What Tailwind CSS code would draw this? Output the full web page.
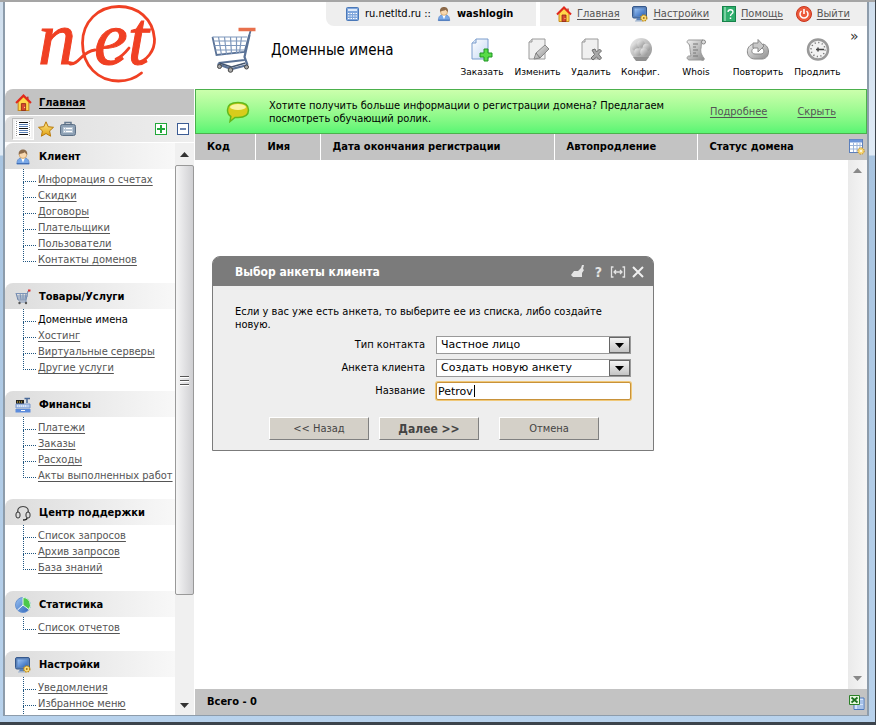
<!DOCTYPE html>
<html lang="ru">
<head>
    <meta charset="UTF-8">
    <meta name="viewport" content="width=device-width, initial-scale=1.0">
    <title>Доменные имена</title>
    <script src="https://cdn.jsdelivr.net/npm/@tailwindcss/browser@4"></script>
</head>
<body class="h-screen overflow-hidden bg-[#3c444c] font-['DejaVu_Sans_Condensed','DejaVu_Sans',sans-serif] text-[11px] leading-4 text-black">

    <!-- shared icons -->
    <svg class="absolute size-0">
        <linearGradient id="gGold" x1="0" y1="0" x2="0" y2="1"><stop offset="0" stop-color="#ffe88a"/><stop offset="1" stop-color="#e0a010"/></linearGradient>
        <linearGradient id="gBlue" x1="0" y1="0" x2="1" y2="1"><stop offset="0" stop-color="#9cc4f4"/><stop offset="1" stop-color="#2a62b8"/></linearGradient>
        <linearGradient id="gGray" x1="0" y1="0" x2="1" y2="1"><stop offset="0" stop-color="#f0f0f0"/><stop offset="1" stop-color="#8c8c8c"/></linearGradient>
        <linearGradient id="gPage" x1="0" y1="0" x2="1" y2="1"><stop offset="0" stop-color="#ffffff"/><stop offset="1" stop-color="#c4d8f4"/></linearGradient>
        <symbol id="house" viewBox="0 0 16 16">
            <path d="M3 7.500 8 2.500l5 5V15.500H3z" fill="#ffd84a" stroke="#c98a1c"/>
            <path d="M6 15.500V9h4v6.500z" fill="#d84a30" stroke="#8f2a18" stroke-width=".8"/>
            <path d="M12 2.500v3" stroke="#c23a2a" stroke-width="1.500"/>
            <path d="M1 8.500 8 1.500l7 7" fill="none" stroke="#e2281c" stroke-width="2"/>
            <circle cx="9" cy="12.500" r=".6" fill="#ffe88a"/>
        </symbol>
        <symbol id="monitor" viewBox="0 0 16 16">
            <rect x=".5" y=".5" width="14" height="11.500" rx="1.500" fill="#5b82b8" stroke="#35588c"/>
            <rect x="2.500" y="2.500" width="10" height="7.500" fill="url(#gBlue)"/>
            <path d="M5 12h5l1 2.500H4z" fill="#5b82b8"/><path d="M3 15h7" stroke="#9ab0cc"/>
            <circle cx="11.800" cy="12" r="3" fill="#f4cc50" stroke="#b88410" stroke-width="1.400" stroke-dasharray="1.400 1"/>
            <circle cx="11.800" cy="12" r="2.400" fill="#f8dc80"/><circle cx="11.800" cy="12" r=".9" fill="#a87008"/>
        </symbol>
        <symbol id="user" viewBox="0 0 16 17">
            <path d="M1.500 16c0-4 1.500-6 4-6.500h5c2.500.5 4 2.500 4 6.500z" fill="#78a8e8" stroke="#5a86c8" stroke-width=".8"/>
            <path d="M6 9.500h4l-2 5z" fill="#fff"/><path d="M1.500 15.500h13" stroke="#3a68b0"/>
            <circle cx="8" cy="6" r="4" fill="#f8d8b0" stroke="#c89858" stroke-width=".8"/>
            <path d="M3.500 6C3 2 5.500.5 8 .5S13 2 12.500 6C11 5.500 10.500 4 10 3.500 8 5 5.500 4.500 3.500 6z" fill="#8c6a4a"/>
        </symbol>
        <symbol id="cart" viewBox="0 0 44 46">
            <path d="M1 10 5 28l28-3 6-21" fill="none" stroke="#5a7296" stroke-width="1.800"/>
            <path d="M1 10h35M2 14h33M3 18.500h31M4 23h29M7 10l3 18M13 10l2 18M19 10l1 17M25 10v17M30 10l-2 16" fill="none" stroke="#7f98bc" stroke-width="1.200"/>
            <path d="M38 8 33 30l3 8M7 36l26-3M6 37l14 5 16-4" fill="none" stroke="#5a7296" stroke-width="2.200"/>
            <path d="M8 36l12 4 14-4" fill="none" stroke="#42546e" stroke-width="1.500"/>
            <path d="M27 2.500h17" stroke="#e8704c" stroke-width="3.500"/>
            <g fill="#aaa" stroke="#444"><circle cx="8" cy="39.500" r="2"/><circle cx="19" cy="43" r="2.300"/><circle cx="35" cy="40" r="2"/></g>
        </symbol>
        <symbol id="page" viewBox="0 0 24 24">
            <path d="M6 1h13v20H3V4z" fill="#f0f0f0" stroke="#9a9a9a"/><path d="M6 1v3H3" fill="#ddd" stroke="#9a9a9a"/>
        </symbol>
    </svg>

    <div class="flex h-screen flex-col pr-px pb-[3px]">
    <div class="flex min-h-0 flex-1 border-t-2 border-t-[#a5a5a5] bg-[linear-gradient(#cfdeed_0,#e0ebf6_153px,#a8c4e0_154px,#b8d2ec_100%)] pr-[6px] pb-[6px] pl-[3px]">
    <div class="flex min-w-0 flex-1 flex-col border-x-2 border-b border-[#8d9cab] bg-white">

        <header class="flex h-[87px] shrink-0">
            <a href="#" aria-label="net" class="w-[190px] shrink-0">
                <svg class="h-[86px] w-40 overflow-visible" viewBox="5 2 160 86">
                    <g fill="#f04023" stroke="#f04023" stroke-width="1" font-family="Liberation Serif, serif" font-style="italic" font-size="76">
                        <text x="38" y="64">n</text><text x="94" y="64">et</text>
                    </g>
                    <path d="M70 64c9 1 12-13 25-14M116 59c6-2 9-6 13-11M135 63C147 62 155 50 154.500 39 153 18 137 6.500 119 6.500 98 6.500 82.500 22 82.500 43c0 23 16 38 36 38 9 0 17-3 23-8" fill="none" stroke="#f04023" stroke-width="2.800" stroke-linecap="round"/>
                </svg>
            </a>

            <div class="flex min-w-0 flex-1 flex-col">
                <nav class="flex h-6 justify-end gap-1">
                    <div class="flex w-[210px] items-center rounded-bl-lg bg-[#eee] pl-5">
                        <svg class="mr-[6px] h-[14px] w-[13px]" viewBox="0 0 13 14"><rect x=".5" y=".5" width="12" height="13" rx="1" fill="#7fa6dc" stroke="#4a78b8"/><path d="M2 3h9" stroke="#dce9fa" stroke-width="2"/><path d="M2 6.500h9M2 9h9M2 11.500h9" stroke="#fff" stroke-dasharray="1.500 1"/></svg>
                        <span>ru.netltd.ru ::</span>
                        <svg class="mx-[6px] h-4 w-[14px]"><use href="#user"/></svg>
                        <b>washlogin</b>
                    </div>
                    <div class="flex w-[327px] items-center justify-between bg-[#eee] pr-[17px] pl-4 text-[#555]">
                        <a href="#" class="flex items-center gap-[5px] underline underline-offset-2"><svg class="size-4"><use href="#house"/></svg>Главная</a>
                        <a href="#" class="flex items-center gap-[5px] underline underline-offset-2"><svg class="size-4"><use href="#monitor"/></svg>Настройки</a>
                        <a href="#" class="flex items-center gap-[5px] underline underline-offset-2">
                            <svg class="h-4 w-[14px]" viewBox="0 0 14 16"><rect x=".5" y=".5" width="13" height="15" fill="#2fae6c" stroke="#16834a"/><path d="M3 1v14" stroke="#c8f0d8"/><path d="M6 6c0-3 5-3 5 0 0 2-2.500 1.500-2.500 4" fill="none" stroke="#fff" stroke-width="1.300"/><path d="M8.500 11.500v1.500" stroke="#fff" stroke-width="1.500"/></svg>Помощь</a>
                        <a href="#" class="flex items-center gap-[5px] underline underline-offset-2">
                            <svg class="size-4" viewBox="0 0 16 16"><circle cx="8" cy="8" r="7.500" fill="#ec5a3c" stroke="#c8341c"/><path d="M5.500 5a4 4 0 1 0 5 0" fill="none" stroke="#fff" stroke-width="1.500"/><path d="M8 3v5" stroke="#fff" stroke-width="1.600"/></svg>Выйти</a>
                    </div>
                </nav>

                <div class="flex flex-1 items-start justify-between">
                    <h1 class="flex items-center gap-[15px] pt-px pl-4 text-[15px]">
                        <svg class="h-[46px] w-[45px]"><use href="#cart"/></svg>Доменные имена
                    </h1>
                    <div class="flex gap-2 pt-3 pr-[9px] font-['DejaVu_Sans',sans-serif] text-[9px] leading-3">
                        <button class="flex w-[46px] flex-col items-center gap-1 whitespace-nowrap">
                            <svg class="size-6" viewBox="0 0 24 24"><path d="M6 1h12v20H2V5z" fill="url(#gPage)" stroke="#7a9ccc"/><path d="M6 1v4H2" fill="#dce8f8" stroke="#7a9ccc"/><path d="M14 11h4v4h4v4h-4v4h-4v-4h-4v-4h4z" fill="#58dc48" stroke="#1e9424"/></svg>Заказать</button>
                        <button class="flex w-[49px] flex-col items-center gap-1 whitespace-nowrap">
                            <svg class="size-6" viewBox="0 0 24 24"><use href="#page"/><path d="m8 21 2-6 9-8 4 4-9 9z" fill="url(#gGray)" stroke="#888"/><path d="m10 15 4 5" stroke="#777"/></svg>Изменить</button>
                        <button class="flex w-[42px] flex-col items-center gap-1 whitespace-nowrap">
                            <svg class="size-6" viewBox="0 0 24 24"><use href="#page"/><path d="m13 12 3-1 1.500 3 3-3 2 2-3 3 3 4-2 2-3-3-3.500 3-2-2 3.500-3.500z" fill="#a8a8a8" stroke="#6e6e6e"/></svg>Удалить</button>
                        <button class="flex w-[41px] flex-col items-center gap-1 whitespace-nowrap">
                            <svg class="size-6" viewBox="0 0 24 24"><circle cx="12" cy="11" r="11" fill="url(#gGray)"/><path d="M4 19h16l-3 4H7z" fill="#909090"/><g fill="url(#gGray)"><circle cx="6.500" cy="9" r="3.800"/><circle cx="12" cy="6" r="3.800"/><circle cx="17.500" cy="9.500" r="3.800"/><circle cx="9" cy="14" r="3.800"/><circle cx="15" cy="14" r="3.800"/></g></svg>Конфиг.</button>
                        <button class="flex w-[54px] flex-col items-center gap-1 whitespace-nowrap">
                            <svg class="size-6" viewBox="0 0 24 24"><path d="M5 2h14c-3 1-1 4-2 8s1 8 3 10c1 2-1 3-3 2H5c-3-1-2-4 0-4h2C6 14 6 8 5 6 2 5 3 2 5 2z" fill="url(#gGray)" stroke="#999"/><circle cx="19.500" cy="4" r="2" fill="#ddd" stroke="#888"/><path d="M9 6h5M9 9h3M9 12h5M9 15h3M9 18h5" stroke="#777"/></svg>Whois</button>
                        <button class="flex w-[54px] flex-col items-center gap-1 whitespace-nowrap">
                            <svg class="size-6" viewBox="0 0 24 24"><path d="M8 6c-9 1-9 15 1 15h7c8 0 9-13 1-15l-1 4c3 2 2 6-1 6H9c-4 0-4-5-1-6z" fill="url(#gGray)" stroke="#888"/><path d="M7 5h5V1.500L18 8l-6 6v-4H7z" fill="#c8c8c8" stroke="#888"/></svg>Повторить</button>
                        <button class="flex w-[49px] flex-col items-center gap-1 whitespace-nowrap">
                            <svg class="size-6" viewBox="0 0 24 24"><circle cx="12" cy="11.500" r="10" fill="#f2f2f2" stroke="#999" stroke-width="2.500"/><circle cx="12" cy="11.500" r="7" fill="none" stroke="#777" stroke-width="1.500" stroke-dasharray="1.200 2.465"/><path d="M10 11.500h8M12 9.500v4" stroke="#444" stroke-width="1.500"/></svg>Продлить</button>
                        <button aria-label="Ещё" class="h-3 w-2 -translate-y-2 text-sm leading-3 text-[#333]">»</button>
                    </div>
                </div>
            </div>
        </header>

        <div class="flex min-h-0 flex-1">
            <aside class="flex w-[190px] shrink-0 flex-col pr-px">
                <div class="flex h-[26px] shrink-0 items-center gap-[7px] rounded-tl-lg bg-[#c3c3c3] pt-px pl-[10px] font-bold">
                    <svg class="size-[17px]"><use href="#house"/></svg>
                    <a href="#" class="underline underline-offset-2">Главная</a>
                </div>
                <div class="mt-px flex h-[26px] shrink-0 items-center rounded-tl-lg bg-linear-to-r from-[#dedede] to-[#eee] pr-[5px] pl-[7px]">
                    <button aria-label="Список" class="mr-1 flex size-[22px] items-center justify-center border border-[#bbb] border-r-white border-b-white bg-[#f2f2f2]">
                        <svg class="size-4" viewBox="0 0 16 16"><path d="M0 0h16v16H0z" fill="#fff"/><path d="M1.500 0v16M14.500 0v16" stroke="#999" stroke-dasharray="1 1"/><path d="M4 1.500h9M4 7.500h9M4 13.500h9" stroke="#111"/><path d="M4 3.500h9M4 5.500h9M4 9.500h9M4 11.500h9" stroke="#5a7fb4"/></svg>
                    </button>
                    <button aria-label="Избранное" class="mr-[6px]"><svg class="size-4" viewBox="0 0 16 16"><path d="m8 .8 2.200 4.900 5.300.6-3.900 3.600 1 5.300L8 12.500l-4.600 2.700 1-5.300L.5 6.300l5.300-.6z" fill="url(#gGold)" stroke="#b87a0c"/></svg></button>
                    <button aria-label="Портфель"><svg class="size-4" viewBox="0 0 16 16"><path d="M5 4V1.500h6V4" fill="none" stroke="#667a90" stroke-width="1.500"/><rect x=".5" y="3.500" width="15" height="11" rx="2" fill="#8da0b4" stroke="#5c7086"/><path d="M3 6h10v6H3z" fill="#b8c6d4"/><path d="M4 7.500h1m1 0h6M4 10.500h1m1 0h6" stroke="#fff"/></svg></button>
                    <button aria-label="Развернуть" class="ml-auto"><svg class="size-3" viewBox="0 0 12 12"><rect x=".5" y=".5" width="11" height="11" fill="#fff" stroke="#22a83a"/><path d="M2 6h8M6 2v8" stroke="#22a83a" stroke-width="2"/></svg></button>
                    <button aria-label="Свернуть" class="ml-[10px]"><svg class="size-3" viewBox="0 0 12 12"><rect x=".5" y=".5" width="11" height="11" fill="#fff" stroke="#3c5c94"/><path d="M3 6h6" stroke="#3c5c94" stroke-width="1.500"/></svg></button>
                </div>

                <div class="mt-px flex min-h-0 flex-1">
                    <nav class="min-w-0 flex-1 overflow-hidden whitespace-nowrap text-[#555] [&_a]:underline [&_a]:underline-offset-2 [&_h2]:flex [&_h2]:h-[26px] [&_h2]:items-center [&_h2]:gap-2 [&_h2]:rounded-tl-lg [&_h2]:bg-linear-to-r [&_h2]:from-[#dcdcdc] [&_h2]:to-[#f8f8f8] [&_h2]:pt-[2px] [&_h2]:pl-[10px] [&_h2]:font-bold [&_h2]:text-black [&_h2_svg]:size-4 [&_i]:-mt-[6px] [&_i]:mr-[2px] [&_i]:h-4 [&_i]:w-[13px] [&_i]:border-b [&_i]:border-l [&_i]:border-dotted [&_i]:border-[#1f5580] [&_li]:flex [&_li]:h-4 [&_ul]:mb-[15px] [&_ul]:overflow-hidden [&_ul]:pt-[3px] [&_ul]:pl-[18px]">
                        <h2><svg><use href="#user"/></svg>Клиент</h2>
                        <ul>
                            <li><i></i><a href="#">Информация о счетах</a></li>
                            <li><i></i><a href="#">Скидки</a></li>
                            <li><i></i><a href="#">Договоры</a></li>
                            <li><i></i><a href="#">Плательщики</a></li>
                            <li><i></i><a href="#">Пользователи</a></li>
                            <li><i></i><a href="#">Контакты доменов</a></li>
                        </ul>
                        <h2><svg viewBox="0 0 16 16"><path d="m1 4 2 7h8l2-9h2" fill="none" stroke="#6a82a8"/><path d="M1 4.500h12M2 7h11M3 9h9M5 4l1 7M8 4v7M11 4l-1 7M11 11v2H4" fill="none" stroke="#7d94b8"/><path d="M13 1.500h2.500" stroke="#e03030" stroke-width="2"/><circle cx="4.500" cy="14" r="1.200" fill="#555"/><circle cx="11" cy="14" r="1.200" fill="#555"/></svg>Товары/Услуги</h2>
                        <ul>
                            <li><i></i><span class="text-black">Доменные имена</span></li>
                            <li><i></i><a href="#">Хостинг</a></li>
                            <li><i></i><a href="#">Виртуальные серверы</a></li>
                            <li><i></i><a href="#">Другие услуги</a></li>
                        </ul>
                        <h2><svg viewBox="0 0 16 16"><path d="M1 3h8v4H1z" fill="#222"/><path d="M2 5h6" stroke="#ffd84a" stroke-dasharray="1 1"/><path d="M9.500 1.500H15M12 2v4" stroke="#4a6a98" stroke-width="1.500"/><path d="M1 7h14v4H1z" fill="#b8cef0" stroke="#7a98cc"/><path d="M2 9h9" stroke="#fff" stroke-dasharray="1 1"/><path d="M.5 12h15v3.500H.5z" fill="#5c8cdc"/><path d="M6 13.500h4" stroke="#fff"/></svg>Финансы</h2>
                        <ul>
                            <li><i></i><a href="#">Платежи</a></li>
                            <li><i></i><a href="#">Заказы</a></li>
                            <li><i></i><a href="#">Расходы</a></li>
                            <li><i></i><a href="#">Акты выполненных работ</a></li>
                        </ul>
                        <h2><svg viewBox="0 0 16 16"><path d="M3 8C2 4 4 1.500 8 1.500S14 4 13 8" fill="none" stroke="#444" stroke-width="1.200"/><rect x="1" y="7" width="4" height="6" rx="2" fill="#ddd" stroke="#333"/><rect x="11" y="7" width="4" height="6" rx="2" fill="#ddd" stroke="#333"/><path d="M12 13c0 2-2 2-4 2" fill="none" stroke="#222" stroke-width="1.300"/></svg>Центр поддержки</h2>
                        <ul>
                            <li><i></i><a href="#">Список запросов</a></li>
                            <li><i></i><a href="#">Архив запросов</a></li>
                            <li><i></i><a href="#">База знаний</a></li>
                        </ul>
                        <h2><svg viewBox="0 0 16 16"><circle cx="8" cy="8" r="7.500" fill="url(#gBlue)" stroke="#6a94d0"/><path d="M8 8V.5A7.500 7.500 0 0 1 14 12.500z" fill="#4cc84c" stroke="#e4f8e4"/><path d="m8 8-5.500 5" stroke="#fff"/></svg>Статистика</h2>
                        <ul>
                            <li><i></i><a href="#">Список отчетов</a></li>
                        </ul>
                        <h2><svg><use href="#monitor"/></svg>Настройки</h2>
                        <ul>
                            <li><i></i><a href="#">Уведомления</a></li>
                            <li><i></i><a href="#">Избранное меню</a></li>
                            <li><i></i><a href="#">Настройки</a></li>
                        </ul>
                    </nav>
                    <div class="flex w-[19px] shrink-0 flex-col bg-[#f0f0f0]">
                        <div class="flex h-[22px] items-center justify-center"><svg class="h-[5px] w-[9px]" viewBox="0 0 9 5"><path d="M0 5 4.500 0 9 5z" fill="#333"/></svg></div>
                        <div class="flex grow-43 basis-0 items-center justify-center rounded-xs border border-[#999] bg-linear-to-r from-[#f6f6f6] via-[#e2e2e4] to-[#cfcfd2]">
                            <svg class="h-[11px] w-[9px]" viewBox="0 0 9 11"><path d="M0 1.500h9M0 5.500h9M0 9.500h9" stroke="#555"/><path d="M0 2.500h9M0 6.500h9M0 10.500h9" stroke="#fff"/></svg>
                        </div>
                        <div class="grow-10 basis-0"></div>
                        <div class="flex h-5 items-center justify-center"><svg class="h-[5px] w-[9px]" viewBox="0 0 9 5"><path d="M0 0h9L4.500 5z" fill="#333"/></svg></div>
                    </div>
                </div>
            </aside>

            <main class="flex min-w-0 flex-1 flex-col">
                <div class="flex h-[45px] shrink-0 items-center border border-[#4cb04c] bg-linear-to-b from-[#cbffac] to-[#58f573] pr-[30px] pl-[30px] leading-[13px]">
                    <svg class="mr-[19px] h-[22px] w-6 shrink-0" viewBox="0 0 24 22"><path d="M12 1.500c6 0 10.500 2 10.500 7.500S18 16.500 12 16.500H9L4 20.500l.8-5C2.500 14 1.500 12 1.500 9c0-5.500 4.500-7.500 10.500-7.500z" fill="#d8cc1c" stroke="#62b81c" stroke-width="1.500"/><ellipse cx="12" cy="6" rx="8" ry="3" fill="#f8f4a0"/></svg>
                    <p class="w-[400px]">Хотите получить больше информации о регистрации домена? Предлагаем посмотреть обучающий ролик.</p>
                    <a href="#" class="ml-auto text-[#555] underline underline-offset-2">Подробнее</a>
                    <a href="#" class="ml-[30px] text-[#555] underline underline-offset-2">Скрыть</a>
                </div>

                <table class="w-full shrink-0 table-fixed bg-[#c3c3c3] text-left">
                    <thead>
                        <tr class="h-[26px]">
                            <th class="w-[60px] border-r border-white pl-3">Код</th>
                            <th class="w-[65px] border-r border-white pl-3">Имя</th>
                            <th class="w-[234px] border-r border-white pl-3">Дата окончания регистрации</th>
                            <th class="w-[143px] border-r border-white pl-3">Автопродление</th>
                            <th class="pl-3">Статус домена</th>
                            <th class="w-[18px]">
                                <button aria-label="Настройка колонок" class="block"><svg class="size-4" viewBox="0 0 16 16"><rect x=".5" y=".5" width="13" height="13" fill="#fff" stroke="#5c80bc"/><path d="M1 2h12" stroke="#6c94d8" stroke-width="3"/><path d="M1 6.500h12M1 10h12M4.500 4v9M8 4v9M11 4v9" stroke="#9cb4d8"/><circle cx="12" cy="12" r="3.200" fill="#f8d878" stroke="#c08c1c" stroke-dasharray="1.500 1"/><circle cx="12" cy="12" r="1" fill="#fff"/></svg></button>
                            </th>
                        </tr>
                    </thead>
                </table>

                <div class="relative flex min-h-0 flex-1">
                    <div class="flex-1"></div>
                    <div class="flex w-[19px] flex-col items-center justify-between bg-linear-to-r from-[#eaeaea] to-[#f6f6f6] py-2">
                        <svg class="h-[5px] w-[9px]" viewBox="0 0 9 5"><path d="M0 5 4.500 0 9 5z" fill="#888"/></svg>
                        <svg class="h-[5px] w-[9px]" viewBox="0 0 9 5"><path d="M0 0h9L4.500 5z" fill="#888"/></svg>
                    </div>

                    <!-- contact profile dialog -->
                    <form class="absolute top-24 left-[17px] w-[442px] rounded-t-lg border border-[#7b7b7b] bg-[#eee]">
                        <div class="flex h-[29px] items-center rounded-t-md bg-[#7b7b7b] pr-[9px] pl-[22px] text-white">
                            <h2 class="mr-auto text-xs font-bold">Выбор анкеты клиента</h2>
                            <button type="button" aria-label="Очистить" class="mr-[10px]"><svg class="size-[14px]" viewBox="0 0 14 14"><path d="m0 10 3-4h4l3-3 1-3h2l-1 4 1 1-2 3v4H2z" fill="#e4e4e4"/></svg></button>
                            <button type="button" class="mr-2 text-sm font-bold text-[#e4e4e4]">?</button>
                            <button type="button" aria-label="Ширина" class="mr-[6px]"><svg class="h-3 w-4" viewBox="0 0 16 12"><path d="M3.500 1h-2v10h2M12.500 1h2v10h-2M4 6h8M6 4 4 6l2 2M10 4l2 2-2 2" fill="none" stroke="#e4e4e4" stroke-width="1.300"/></svg></button>
                            <button type="button" aria-label="Закрыть"><svg class="size-3" viewBox="0 0 12 12"><path d="m1 1 10 10M11 1 1 11" stroke="#f0f0f0" stroke-width="2"/></svg></button>
                        </div>
                        <div class="px-[22px] pt-[19px] pb-[10px]">
                            <p class="w-[380px] leading-[13px]">Если у вас уже есть анкета, то выберите ее из списка, либо создайте новую.</p>
                            <div class="mt-[5px] grid grid-cols-[190px_195px] items-center gap-x-[11px] gap-y-[5px] text-right">
                                <label for="type">Тип контакта</label>
                                <div class="relative h-[18px] font-['DejaVu_Sans',sans-serif]">
                                    <select id="type" class="block h-[18px] w-full appearance-none border border-[#999] bg-white pl-1 text-[11px] leading-4"><option>Частное лицо</option></select>
                                    <span class="pointer-events-none absolute top-px right-px flex h-4 w-[21px] items-center justify-center border border-[#666] bg-linear-to-b from-[#f4f4f4] to-[#c4c4c4]"><svg class="h-[5px] w-[9px]" viewBox="0 0 9 5"><path d="M0 0h9L4.500 5z"/></svg></span>
                                </div>
                                <label for="profile">Анкета клиента</label>
                                <div class="relative h-[18px] font-['DejaVu_Sans',sans-serif]">
                                    <select id="profile" class="block h-[18px] w-full appearance-none border border-[#999] bg-white pl-1 text-[11px] leading-4"><option>Создать новую анкету</option></select>
                                    <span class="pointer-events-none absolute top-px right-px flex h-4 w-[21px] items-center justify-center border border-[#666] bg-linear-to-b from-[#f4f4f4] to-[#c4c4c4]"><svg class="h-[5px] w-[9px]" viewBox="0 0 9 5"><path d="M0 0h9L4.500 5z"/></svg></span>
                                </div>
                                <label for="name">Название</label>
                                <div class="relative h-[18px]">
                                    <input id="name" type="text" value="Petrov" class="block h-[18px] w-full rounded-xs border border-[#c8923a] bg-white px-px text-[11px] leading-4 caret-transparent ring-1 ring-[#f0c878] outline-none font-['DejaVu_Sans',sans-serif]">
                                    <span class="pointer-events-none absolute top-[3px] left-[38px] h-3 w-px bg-black"></span>
                                </div>
                            </div>
                            <div class="mt-[17px] flex pl-[34px] text-[#444]">
                                <button type="button" class="mr-[10px] h-[23px] w-[100px] border border-white border-r-[#808080] border-b-[#808080] bg-[#d4d0c8]">&lt;&lt; Назад</button>
                                <button type="submit" class="mr-5 h-[23px] w-[100px] border border-white border-r-[#808080] border-b-[#808080] bg-[#d4d0c8] text-xs font-bold">Далее &gt;&gt;</button>
                                <button type="button" class="h-[23px] w-[100px] border border-white border-r-[#808080] border-b-[#808080] bg-[#d4d0c8]">Отмена</button>
                            </div>
                        </div>
                    </form>
                </div>

                <footer class="flex h-[26px] shrink-0 items-center justify-between bg-[#c3c3c3] pr-[2px] pl-3 font-bold">
                    Всего - 0
                    <button aria-label="Экспорт в Excel"><svg class="size-4" viewBox="0 0 16 16"><path d="M5 4h10v11.500H5z" fill="#d4e4fc" stroke="#4c78bc"/><path d="M11 7h3M11 9h3M8 12h6M8 14h6" stroke="#7ca0d8"/><path d="M.5 1.500h10v9H.5z" fill="#e8f8e0" stroke="#2c8028"/><path d="m2.500 3.500 6 5M8.500 3.500l-6 5" stroke="#1c7020" stroke-width="1.800"/></svg></button>
                </footer>
            </main>
        </div>
    </div>
    </div>
    </div>
</body>
</html>
